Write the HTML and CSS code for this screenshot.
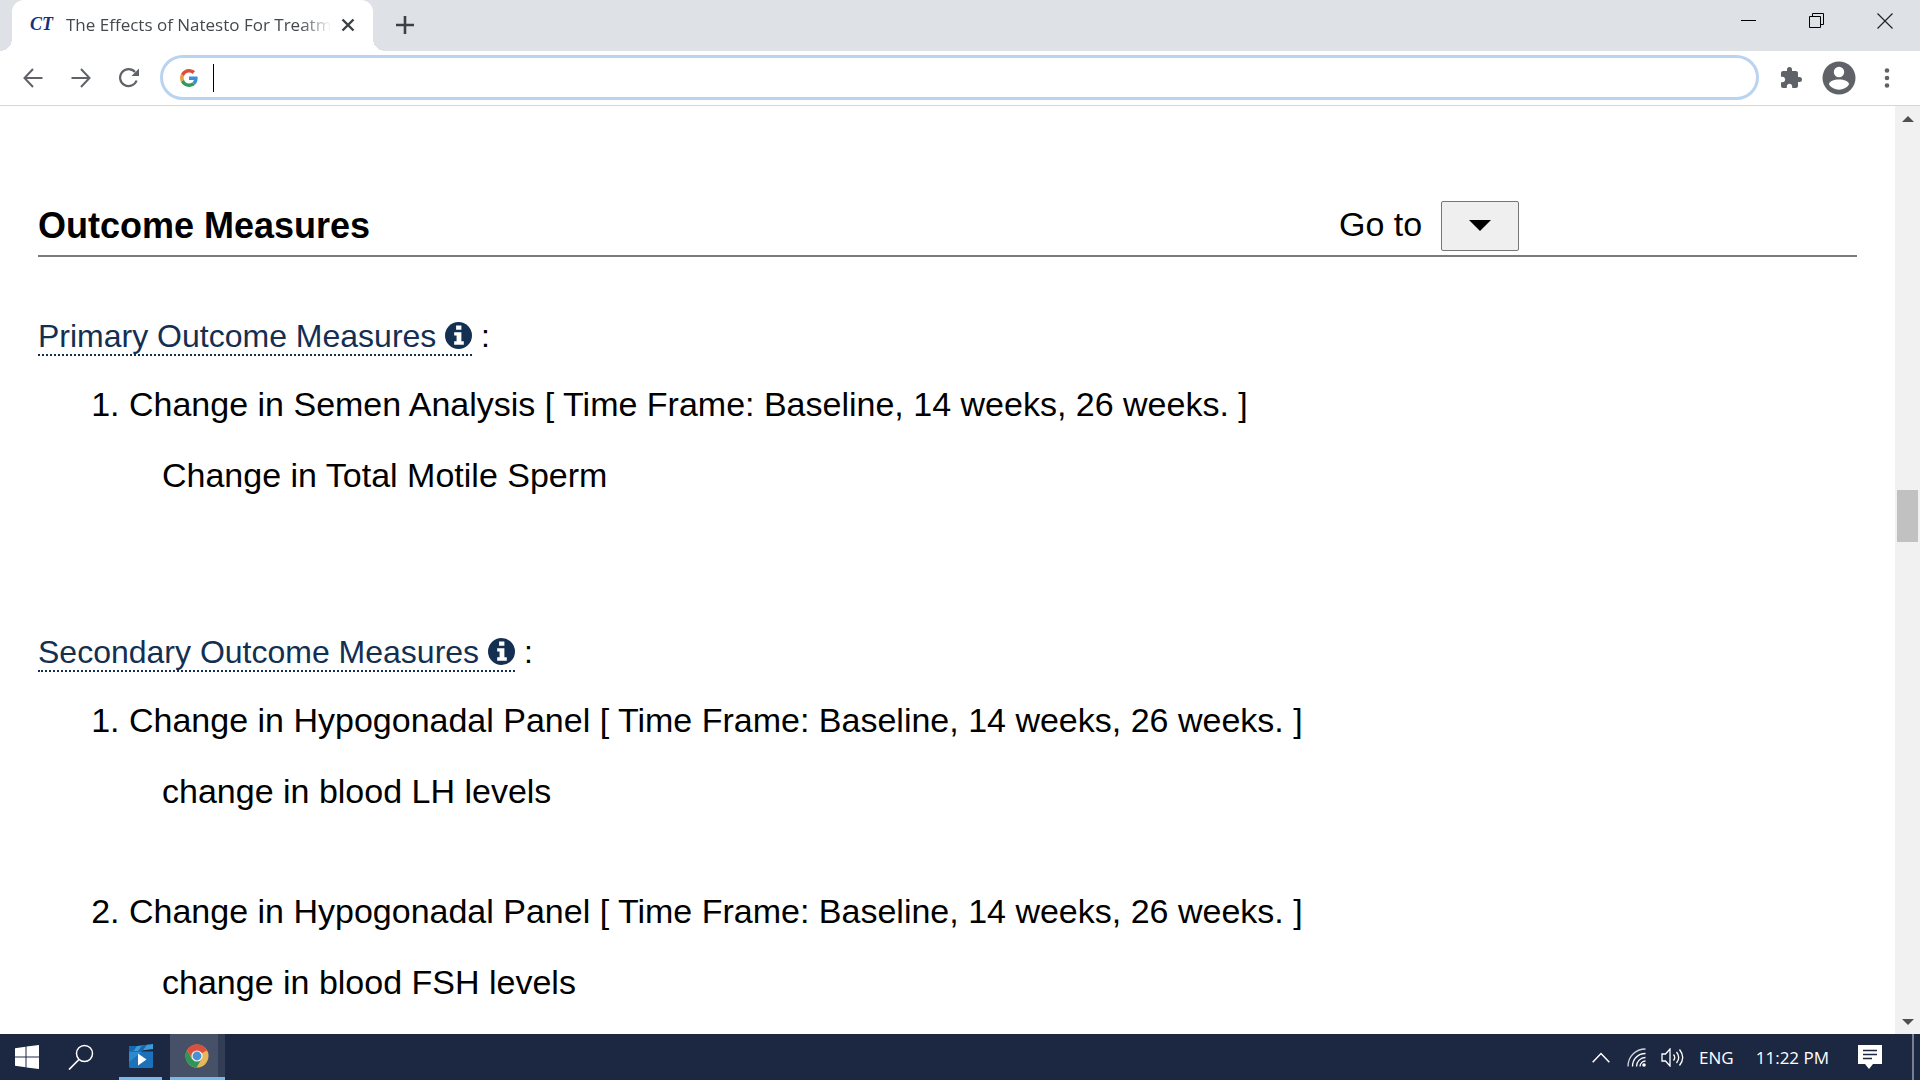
FILE: index.html
```html
<!DOCTYPE html>
<html lang="en">
<head>
  <meta charset="UTF-8">
  <meta name="viewport" content="width=device-width, initial-scale=1">
  <title>The Effects of Natesto For Treatment</title>
  <link rel="stylesheet" href="styles.css">
</head>
<body>
  <header class="browser">
    <div class="tab-strip">
      <div class="tab">
        <span class="favicon">CT</span>
        <span class="tab-title">The Effects of Natesto For Treatm</span>
        <button class="icon-btn tab-close" aria-label="Close tab">
          <svg width="14" height="14" viewBox="0 0 14 14"><path d="M1.5 1.5l11 11M12.500 1.500l-11 11" fill="none" stroke="#3c4043" stroke-width="2.400"/></svg>
        </button>
      </div>
      <button class="icon-btn new-tab" aria-label="New tab">
        <svg width="18" height="18" viewBox="0 0 18 18"><path d="M9 0v18M0 9h18" fill="none" stroke="#3c4043" stroke-width="2.600"/></svg>
      </button>
      <div class="window-controls">
        <button class="icon-btn" aria-label="Minimize">
          <svg width="16" height="16" viewBox="0 0 16 16"><path d="M0 7.500h15" stroke="#000"/></svg>
        </button>
        <button class="icon-btn" aria-label="Restore">
          <svg width="16" height="16" viewBox="0 0 16 16"><path d="M.5 3.500h11v11H.5zM3.500 3.500v-3h11v11h-3" fill="none" stroke="#000"/></svg>
        </button>
        <button class="icon-btn" aria-label="Close">
          <svg width="16" height="16" viewBox="0 0 16 16"><path d="M.5.5l15 15M15.500.5l-15 15" stroke="#222" stroke-width="1.200"/></svg>
        </button>
      </div>
    </div>
    <div class="toolbar">
      <nav class="nav-buttons">
        <button class="icon-btn" aria-label="Back">
          <svg width="20" height="20" viewBox="0 0 20 20"><path d="M19.500 10H1.500M10 1L1.500 10l8.500 9" fill="none" stroke="#5f6368" stroke-width="2"/></svg>
        </button>
        <button class="icon-btn" aria-label="Forward">
          <svg width="20" height="20" viewBox="0 0 20 20"><path d="M.5 10h18M10 1l8.500 9-8.500 9" fill="none" stroke="#5f6368" stroke-width="2"/></svg>
        </button>
        <button class="icon-btn" aria-label="Reload">
          <svg width="20" height="20" viewBox="0 0 20 20"><path d="M17.600 12.500A8.500 8.500 0 1 1 16 4" fill="none" stroke="#5f6368" stroke-width="2.200"/><path d="M20 .5V8h-7.500z" fill="#5f6368"/></svg>
        </button>
      </nav>
      <div class="omnibox">
        <svg width="18" height="18" viewBox="0 0 48 48"><path fill="#d9503f" d="M24 9.500c3.540 0 6.710 1.220 9.210 3.600l6.850-6.850C35.900 2.380 30.470 0 24 0 14.620 0 6.510 5.380 2.560 13.220l7.980 6.190C12.430 13.720 17.740 9.500 24 9.500z"/><path fill="#3f8fd8" d="M46.980 24.550c0-1.570-.15-3.090-.38-4.550H24v9.020h12.940c-.58 2.960-2.260 5.480-4.780 7.180l7.730 6c4.510-4.180 7.090-10.360 7.090-17.650z"/><path fill="#e2a23c" d="M10.530 28.590A14.500 14.500 0 0 1 9.770 24c0-1.600.27-3.140.76-4.590l-7.980-6.190A23.900 23.900 0 0 0 0 24c0 3.880.92 7.540 2.560 10.780z"/><path fill="#349a5c" d="M24 48c6.480 0 11.930-2.130 15.890-5.810l-7.730-6c-2.150 1.450-4.920 2.300-8.160 2.300-6.260 0-11.570-4.220-13.470-9.910l-7.980 6.190C6.510 42.620 14.620 48 24 48z"/></svg>
        <span class="caret"></span>
        <input class="url" type="text" aria-label="Search or type a URL">
      </div>
      <div class="toolbar-actions">
        <button class="icon-btn" aria-label="Extensions">
          <svg width="24" height="24" viewBox="0 0 24 24"><path fill="#5f6368" d="M20.500 11H19V7c0-1.100-.9-2-2-2h-4V3.500a2.500 2.500 0 0 0-5 0V5H4c-1.100 0-1.990.9-1.990 2v3.800H3.500c1.490 0 2.700 1.210 2.700 2.700s-1.210 2.700-2.700 2.700H2V20c0 1.100.9 2 2 2h3.800v-1.500c0-1.490 1.210-2.700 2.700-2.700s2.700 1.210 2.700 2.700V22H17c1.100 0 2-.9 2-2v-4h1.500a2.500 2.500 0 0 0 0-5z"/></svg>
        </button>
        <button class="icon-btn" aria-label="Profile">
          <svg width="34" height="34" viewBox="0 0 34 34"><circle cx="17" cy="17" r="16.500" fill="#5f6368"/><circle cx="17" cy="11" r="5.200" fill="#fff"/><path d="M7 23.500c0-3.500 5-5 10-5s10 1.500 10 5c-2.200 3.300-5.800 5.200-10 5.200s-7.800-1.900-10-5.200z" fill="#fff"/></svg>
        </button>
        <button class="icon-btn" aria-label="Menu">
          <svg width="6" height="20" viewBox="0 0 6 20"><g fill="#5f6368"><circle cx="3" cy="2.500" r="2.300"/><circle cx="3" cy="10" r="2.300"/><circle cx="3" cy="17.500" r="2.300"/></g></svg>
        </button>
      </div>
    </div>
  </header>

  <div class="viewport">
    <main class="page">
      <div class="section-head">
        <h2>Outcome Measures</h2>
        <div class="goto">
          <label for="goto">Go to</label>
          <span class="goto-select">
            <select id="goto"><option value=""></option></select>
          </span>
        </div>
      </div>

      <section class="outcomes">
        <h3><a class="term" href="#primary">Primary Outcome Measures <svg class="info" viewBox="0 0 28 28"><circle cx="14" cy="14" r="14" fill="#132f52"/><path d="M11.500 3.500h5.500V8h-5.500zM9.500 10.500H17v9.500h2.500v3.500h-10V20H12v-6H9.500z" fill="#fff"/></svg></a> :</h3>
        <ol>
          <li>Change in Semen Analysis [ Time Frame: Baseline, 14 weeks, 26 weeks. ]
            <p>Change in Total Motile Sperm</p>
          </li>
        </ol>
      </section>

      <section class="outcomes">
        <h3><a class="term" href="#secondary">Secondary Outcome Measures <svg class="info" viewBox="0 0 28 28"><circle cx="14" cy="14" r="14" fill="#132f52"/><path d="M11.500 3.500h5.500V8h-5.500zM9.500 10.500H17v9.500h2.500v3.500h-10V20H12v-6H9.500z" fill="#fff"/></svg></a> :</h3>
        <ol>
          <li>Change in Hypogonadal Panel [ Time Frame: Baseline, 14 weeks, 26 weeks. ]
            <p>change in blood LH levels</p>
          </li>
          <li>Change in Hypogonadal Panel [ Time Frame: Baseline, 14 weeks, 26 weeks. ]
            <p>change in blood FSH levels</p>
          </li>
        </ol>
      </section>
    </main>
    <div class="scrollbar">
      <span class="arrow-up"></span>
      <div class="track"><div class="thumb"></div></div>
      <span class="arrow-down"></span>
    </div>
  </div>

  <footer class="taskbar">
    <button class="icon-btn task" aria-label="Start">
      <svg width="24" height="24" viewBox="0 0 24 24"><path fill="#fff" d="M0 3.200L10.500 1.800v9.700H0zM11.500 1.600L24 0v11.500H11.500zM0 12.500h10.500v9.700L0 20.800zM11.500 12.500H24V24l-12.500-1.600z"/></svg>
    </button>
    <button class="icon-btn task" aria-label="Search">
      <svg width="26" height="26" viewBox="0 0 26 26"><circle cx="16.500" cy="9.500" r="8" fill="none" stroke="#fff" stroke-width="1.500"/><path d="M11 15.500L1 25.500" stroke="#fff" stroke-width="1.700"/></svg>
    </button>
    <button class="icon-btn task task-open" aria-label="Movies">
      <svg width="24" height="24" viewBox="0 0 24 24"><path d="M0 2h8l16-2v5L9 7H0z" fill="#3d9bdc"/><path d="M0 2h8L5 6.500 0 8zM13 1.400l5-.7L14 6.300 9 7z" fill="#1668b0"/><path d="M0 7.500h24v15a1.500 1.500 0 0 1-1.500 1.500h-21A1.500 1.500 0 0 1 0 22.500z" fill="#1b72ba"/><path d="M0 7.500h13L0 18z" fill="#2b8bd0"/><path d="M9 9.500l8.500 6L9 21.500z" fill="#fff"/></svg>
    </button>
    <button class="icon-btn task task-active" aria-label="Chrome">
      <svg width="24" height="24" viewBox="0 0 24 24"><circle cx="12" cy="12" r="11.500" fill="#e8b65a"/><path d="M12 12L2 6.200A11.500 11.500 0 0 1 22 6.200z" fill="#d9503f"/><path d="M12 6.500h10.100A11.500 11.500 0 0 0 2 6.200l5 8z" fill="#d9503f"/><path d="M2 6.200A11.500 11.500 0 0 0 11.500 23.500l5-8.500-9.500 0z" fill="#2f9455"/><circle cx="12" cy="12" r="5.600" fill="#f4f4f4"/><circle cx="12" cy="12" r="4.400" fill="#4a90d2"/></svg>
    </button>
    <div class="tray">
      <svg width="18" height="11" viewBox="0 0 18 11"><path d="M.7 10.300L9 1.500l8.300 8.800" fill="none" stroke="#fff" stroke-width="1.500"/></svg>
      <svg width="19" height="19" viewBox="0 0 19 19"><g fill="none" stroke="#fff" stroke-width="1.300"><path d="M1 18.500C1 8.500 8.500 1 18.500 1" opacity=".8"/><path d="M5.500 18.500c0-7.500 5.500-13 13-13"/><path d="M9.500 18.500c0-5 4-9 9-9"/><path d="M13 18.500c0-3 2.500-5.500 5.500-5.500"/></g><circle cx="17" cy="17" r="1.800" fill="#fff"/></svg>
      <svg width="23" height="19" viewBox="0 0 23 19"><g fill="none" stroke="#fff" stroke-width="1.300"><path d="M1 6h3.500L9 1v17l-4.500-5H1z"/><path d="M12.500 6.500c1.600 2 1.600 4 0 6M15.500 4c2.800 3.500 2.800 7.500 0 11M18.500 1.500c4 5 4 11 0 16"/></g></svg>
      <span>ENG</span>
      <span class="clock">11:22 PM</span>
      <svg width="24" height="24" viewBox="0 0 24 24"><path d="M0 0h24v19h-9l-4 5-4-5H0z" fill="#fff"/><path d="M5 5.500h14M5 9.500h14M5 13.500h9" stroke="#1c2842" stroke-width="1.300"/></svg>
    </div>
  </footer>
</body>
</html>
```
FILE: styles.css
```css
:root {
  --strip: #dee1e6;
  --link: #132f52;
  --taskbar: #1c2842;
  --accent: #76b9ed;
}

* {
  box-sizing: border-box;
}

body {
  margin: 0;
  height: 100vh;
  display: flex;
  flex-direction: column;
  overflow: hidden;
  background: #fff;
  color: #000;
  font-family: "Liberation Sans", Arial, sans-serif;
}

svg {
  display: block;
  flex: none;
}

.icon-btn {
  display: flex;
  align-items: center;
  justify-content: center;
  padding: 0;
  border: none;
  background: none;
}

/* Browser chrome */
.tab-strip {
  display: flex;
  align-items: center;
  height: 51px;
  padding-left: 12px;
  background: var(--strip);
}

.tab {
  position: relative;
  display: flex;
  align-items: center;
  width: 361px;
  height: 51px;
  padding: 0 18px 2px;
  border-radius: 12px 12px 0 0;
  background: #fff;
}

.tab::before,
.tab::after {
  content: "";
  position: absolute;
  bottom: 0;
  width: 12px;
  height: 12px;
}

.tab::before {
  right: 100%;
  background: radial-gradient(circle at 0 0, transparent 12px, #fff 12px);
}

.tab::after {
  left: 100%;
  background: radial-gradient(circle at 100% 0, transparent 12px, #fff 12px);
}

.favicon {
  width: 36px;
  color: #14317c;
  font: italic bold 18px "Liberation Serif", serif;
}

.tab-title {
  flex: 1;
  overflow: hidden;
  white-space: nowrap;
  color: #45494d;
  font: 17px "Open Sans", sans-serif;
  -webkit-mask-image: linear-gradient(to right, #000 235px, transparent 265px);
  mask-image: linear-gradient(to right, #000 235px, transparent 265px);
}

.tab-close {
  margin-left: 10px;
}

.new-tab {
  margin-left: 23px;
  padding-bottom: 2px;
}

.window-controls {
  display: flex;
  gap: 52px;
  margin-left: auto;
  padding: 0 27px 9px 0;
}

.toolbar {
  display: flex;
  align-items: center;
  height: 55px;
  padding: 0 30px 1px 23px;
  border-bottom: 1px solid #d5d7da;
}

.nav-buttons {
  display: flex;
  gap: 28px;
  margin-right: 21px;
}

.omnibox {
  display: flex;
  flex: 1;
  align-items: center;
  height: 45px;
  padding: 0 17px;
  border: 3px solid #b9d3f0;
  border-radius: 23px;
}

.caret {
  width: 1px;
  height: 28px;
  margin-left: 15px;
  background: #000;
}

.url {
  flex: 1;
  border: none;
  outline: none;
  background: none;
  font: 20px "Open Sans", sans-serif;
}

.toolbar-actions {
  display: flex;
  align-items: center;
  gap: 19px;
  margin-left: 20px;
}

.toolbar-actions .icon-btn:last-child {
  margin-left: 9px;
}

/* Page */
.viewport {
  display: flex;
  flex: 1;
  min-height: 0;
}

.page {
  flex: 1;
  padding: 95px 38px 0;
  overflow: hidden;
}

.section-head {
  display: grid;
  grid-template-columns: 1fr 518px;
  align-items: center;
  padding-bottom: 4px;
  border-bottom: 2px solid #7d7a7b;
}

.section-head h2 {
  margin: 0;
  font-size: 36px;
  line-height: 40px;
}

.goto {
  display: flex;
  align-items: flex-start;
  gap: 19px;
  font-size: 34px;
  line-height: 46px;
}

.goto-select {
  position: relative;
  width: 78px;
  height: 50px;
}

.goto-select::after {
  content: "";
  position: absolute;
  top: 19px;
  left: 28px;
  border: 11px solid transparent;
  border-top-color: #000;
  border-bottom: none;
  pointer-events: none;
}

.goto select {
  display: block;
  width: 100%;
  height: 100%;
  border: 1px solid #767676;
  border-radius: 2px;
  background: #efefef;
  appearance: none;
}

.outcomes {
  display: flow-root;
  margin-bottom: 57px;
}

.section-head + .outcomes {
  margin-top: 59px;
}

.outcomes h3 {
  margin: 0 0 28px;
  font-size: 32px;
  font-weight: normal;
  line-height: 40px;
}

.term {
  border-bottom: 2px dotted var(--link);
  color: var(--link);
  text-decoration: none;
}

.info {
  display: inline-block;
  width: 27px;
  height: 27px;
  vertical-align: -2px;
}

.outcomes ol {
  margin: 0;
  padding-left: 91px;
  font-size: 34px;
  line-height: 40px;
}

.outcomes li {
  margin-bottom: 80px;
}

.outcomes p {
  margin: 31px 0 0 33px;
}

/* Scrollbar */
.scrollbar {
  display: flex;
  flex-direction: column;
  align-items: center;
  width: 25px;
  padding: 10px 0 9px;
  background: #f1f1f1;
}

.track {
  flex: 1;
  width: 21px;
  padding-top: 368px;
}

.thumb {
  height: 52px;
  background: #c1c1c1;
}

.arrow-up,
.arrow-down {
  border: 6px solid transparent;
}

.arrow-up {
  border-top: none;
  border-bottom-color: #505050;
}

.arrow-down {
  border-bottom: none;
  border-top-color: #505050;
}

/* Taskbar */
.taskbar {
  display: flex;
  height: 46px;
  padding-right: 6px;
  background: var(--taskbar);
  color: #fff;
  font: 17px "Open Sans", sans-serif;
}

.task {
  width: 54px;
}

.task-open {
  width: 43px;
  margin: 0 8px 0 11px;
  border-bottom: 3px solid var(--accent);
}

.task-active {
  width: 55px;
  padding-right: 2px;
  border-bottom: 3px solid var(--accent);
  background: linear-gradient(to right, #465067 48px, #333d55 48px);
}

.tray {
  display: flex;
  align-items: center;
  gap: 17px;
  margin-left: auto;
  padding-right: 30px;
  border-right: 2px solid #777f8e;
}

.tray svg + svg {
  margin-right: -2px;
}

.clock {
  margin: 0 12px 0 5px;
}
```
